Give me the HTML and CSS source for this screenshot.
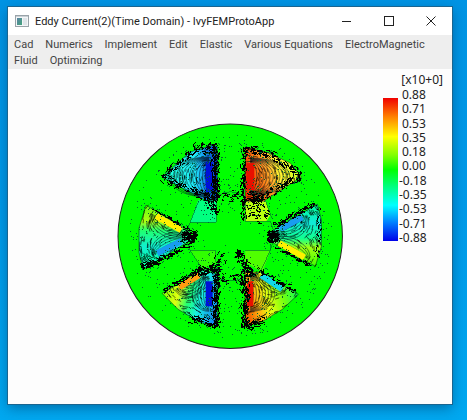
FILE: index.html
```html
<!DOCTYPE html>
<html lang="en">
<head>
  <meta charset="UTF-8" />
  <title>Eddy Current(2)(Time Domain) - IvyFEMProtoApp</title>
  <link rel="stylesheet" href="styles.css">
</head>
<body>

  <div class="window">
    <header class="titlebar">
      <svg class="app-icon" viewBox="0 0 14 12" aria-hidden="true">
        <defs>
          <linearGradient id="iconFill" x1="0" y1="0" x2="1" y2="1">
            <stop offset="0" stop-color="#5b83a3" />
            <stop offset="1" stop-color="#43a47c" />
          </linearGradient>
        </defs>
        <rect x="0.5" y="0.5" width="13" height="11" fill="#f4f6f7" stroke="#9aa3a9" />
        <rect x="1" y="1" width="12" height="1" fill="#c9d0d5" />
        <rect x="2" y="3" width="5" height="7" fill="url(#iconFill)" />
        <rect x="8" y="3" width="4" height="7" fill="#dfe5e9" />
      </svg>
      <h1>Eddy Current(2)(Time Domain) - IvyFEMProtoApp</h1>
      <div class="caption-buttons">
        <button type="button" aria-label="Minimize"><svg viewBox="0 0 10 10"><path d="M0 5.5H9" /></svg></button>
        <button type="button" aria-label="Maximize"><svg viewBox="0 0 10 10"><path d="M.5 .5H9.5V9.5H.5Z" /></svg></button>
        <button type="button" aria-label="Close"><svg viewBox="0 0 10 10"><path class="cross" d="M.5 .5L9.5 9.5M9.5 .5L.5 9.5" /></svg></button>
      </div>
    </header>

    <nav class="menu">
      <button type="button">Cad</button>
      <button type="button">Numerics</button>
      <button type="button">Implement</button>
      <button type="button">Edit</button>
      <button type="button">Elastic</button>
      <button type="button">Various Equations</button>
      <button type="button">ElectroMagnetic</button>
      <button type="button">Fluid</button>
      <button type="button">Optimizing</button>
    </nav>

    <main class="view">
      <svg class="plot" viewBox="117 123 226 226" role="img" aria-label="Field plot">
        <defs>
          <linearGradient id="topLeft"><stop offset="0" stop-color="#00ffa0" /><stop offset=".2" stop-color="#1fffe0" /><stop offset=".6" stop-color="#20e8f8" /><stop offset=".75" stop-color="#169af0" /><stop offset="1" stop-color="#0030d0" /></linearGradient>
          <linearGradient id="topRight" x1="0" y1=".6" x2="1" y2=".3"><stop offset="0" stop-color="#f03000" /><stop offset=".22" stop-color="#f86a10" /><stop offset=".42" stop-color="#ffa828" /><stop offset=".58" stop-color="#fff030" /><stop offset="1" stop-color="#c0ff20" /></linearGradient>
          <linearGradient id="left" x1="0" y1="0" x2="0" y2="1"><stop offset="0" stop-color="#60ff10" /><stop offset=".25" stop-color="#b0ff10" /><stop offset=".4" stop-color="#20ff70" /><stop offset=".65" stop-color="#10f0d0" /><stop offset="1" stop-color="#00ff90" /></linearGradient>
          <linearGradient id="right" x1="0" y1="0" x2="0" y2="1"><stop offset="0" stop-color="#00ff90" /><stop offset=".3" stop-color="#10e8d8" /><stop offset=".55" stop-color="#10ff90" /><stop offset=".7" stop-color="#a0ff10" /><stop offset="1" stop-color="#40ff00" /></linearGradient>
          <linearGradient id="bottomLeft" x1="0" y1=".3" x2="1" y2=".6"><stop offset="0" stop-color="#70ff00" /><stop offset=".3" stop-color="#e0ff10" /><stop offset=".5" stop-color="#20ff70" /><stop offset=".7" stop-color="#18f0e0" /><stop offset="1" stop-color="#1090f0" /></linearGradient>
          <linearGradient id="bottomRight" x1="0" y1=".6" x2="1" y2=".3"><stop offset="0" stop-color="#f06000" /><stop offset=".2" stop-color="#ffb010" /><stop offset=".4" stop-color="#e8ff10" /><stop offset=".7" stop-color="#70ff10" /><stop offset="1" stop-color="#00ff60" /></linearGradient>
        </defs>

        <circle class="stator" cx="230" cy="236" r="112" />

        <g class="shoes">
          <path fill="#00ff80" d="M198 200L217 200L216 222H190Z" />
          <path fill="#b8ff10" d="M245 200L265 200L270 215L266 221H245Z" />
          <path fill="#30ff00" d="M190 250H216V262L203 269Z" />
          <path fill="#50ff00" d="M245 250H270L262 272L245 262Z" />
        </g>

        <g id="coils"></g>

        <path class="outline" d="M190 222H216V197M245 197V221H270M190 250H215V262M245 250H270V245M190 222L185 236L190 250L203 270M270 221L275 236L270 250L260 272M198 202L190 222M265 200L272 219M216 197Q230 186 245 197M216 277Q230 284 245 277" />
        <path id="fine-arrows" class="arrows fine" />
        <g id="bars"></g>
        <path id="arrows" class="arrows" />
        <path id="dots" class="dots" />
      </svg>

      <div class="legend">
        <div class="legend-title">[x10+0]</div>
        <div class="legend-body">
          <div class="legend-bar"></div>
          <ol class="legend-labels">
            <li>0.88</li>
            <li>0.71</li>
            <li>0.53</li>
            <li>0.35</li>
            <li>0.18</li>
            <li>0.00</li>
            <li class="negative">-0.18</li>
            <li class="negative">-0.35</li>
            <li class="negative">-0.53</li>
            <li class="negative">-0.71</li>
            <li class="negative">-0.88</li>
          </ol>
        </div>
      </div>
    </main>
  </div>

  <script src="plot.js"></script>

</body>
</html>
```

FILE: styles.css
```css
* {
  box-sizing: border-box;
}
html {
  height: 100%;
}
body {
  margin: 0;
  height: 100%;
  padding: 7px 15px 16px 8px;
  background: linear-gradient(#0094e4, #009ae8 50%, #00a8f0);
  font-family: "Noto Sans", "Open Sans", sans-serif;
  color: #222;
}
button {
  border: 0;
  padding: 0;
  background: none;
  font: inherit;
  color: inherit;
}
.window {
  display: flex;
  flex-direction: column;
  min-height: 100%;
  background: #fdfdfd;
  outline: 1px solid #1a6590;
  box-shadow: 0 4px 12px rgba(0, 40, 80, 0.45);
}

/* title bar */
.titlebar {
  display: flex;
  align-items: center;
  height: 28px;
  padding-left: 7px;
  background: #fff;
}
.app-icon {
  width: 14px;
  height: 12px;
}
.titlebar h1 {
  flex: 1;
  margin: 0 0 0 6px;
  font-family: Roboto, sans-serif;
  font-size: 11px;
  font-weight: normal;
  white-space: nowrap;
}
.caption-buttons {
  display: flex;
}
.caption-buttons button {
  display: flex;
  align-items: center;
  justify-content: center;
  width: 42px;
  height: 28px;
}
.caption-buttons svg {
  width: 10px;
  height: 10px;
  fill: none;
  stroke: #222;
  shape-rendering: crispEdges;
}
.caption-buttons .cross {
  shape-rendering: auto;
}

/* menu */
.menu {
  display: flex;
  flex-wrap: wrap;
  column-gap: 12px;
  padding: 2px 6px 0;
  background: #eee;
  font-family: Roboto, sans-serif;
  font-size: 11px;
  line-height: 16px;
  color: #444;
}

/* result view */
.view {
  position: relative;
  flex: 1;
  display: flex;
  align-items: center;
  justify-content: center;
}
.plot {
  width: 51%;
}
.stator {
  fill: #0f0;
  stroke: #222;
  stroke-width: 1;
}
.outline,
.arrows,
.contour {
  fill: none;
  stroke: #000;
  shape-rendering: crispEdges;
}
.outline {
  stroke: #063;
  stroke-width: 0.6;
}
.arrows {
  stroke-width: 1;
}
.fine {
  stroke-width: 0.6;
  shape-rendering: auto;
}
.contour {
  stroke: #012;
  stroke-width: 0.5;
  shape-rendering: auto;
}
.dots {
  fill: #063;
  shape-rendering: crispEdges;
}

/* colour legend */
.legend {
  position: absolute;
  top: 3px;
  right: 9px;
  width: 60px;
  font-size: 12px;
  line-height: 16px;
}
.legend-title {
  text-align: right;
}
.legend-body {
  display: flex;
  gap: 1px;
}
.legend-bar {
  width: 15px;
  height: 143px;
  margin-top: 10px;
  background: linear-gradient(#f00000, #ff8000 13%, #ffff00 27%, #80ff00 40%, #00ff00 50%, #00ff80 62%, #00ffff 75%, #0080ff 87%, #0000e8);
}
.legend-labels {
  display: flex;
  flex-direction: column;
  justify-content: space-between;
  height: 157px;
  margin: 0;
  padding: 0;
  list-style: none;
  line-height: 14px;
}
.legend-labels li {
  padding-left: 3px;
}
.legend-labels .negative {
  padding-left: 0;
}
```

FILE: plot.js
```js
const svgNS = 'http://www.w3.org/2000/svg';

// slot outline, fill gradient and conductor bars (x1, y1, x2, y2)
const coils = [
  {
    fill: 'topLeft', shape: [[162, 177], [190, 152], [213, 145], [217, 147], [217, 199], [207, 201]],
    bars: [{ line: [209, 162, 209, 192], width: 7, color: '#0010d8', bend: -42 }]
  },
  {
    fill: 'topRight', shape: [[245, 147], [268, 153], [290, 163], [301, 177], [263, 201], [245, 201]],
    bars: [{ line: [250, 163, 250, 190], width: 8, color: '#e81000', bend: 42 }]
  },
  {
    fill: 'left', shape: [[146, 205], [190, 232], [192, 239], [143, 269], [139, 252], [139, 228]],
    bars: [
      { line: [156, 216, 181, 230], width: 6, color: '#fff000', bend: -14 },
      { line: [157, 253, 181, 241], width: 6, color: '#189cf0', bend: 14 }
    ]
  },
  {
    fill: 'right', shape: [[317, 204], [321, 220], [321, 246], [315, 266], [270, 241], [270, 232]],
    bars: [
      { line: [280, 229, 302, 217], width: 6, color: '#189cf0', bend: -16 },
      { line: [279, 243, 304, 257], width: 6, color: '#fff000', bend: 12 }
    ]
  },
  {
    fill: 'bottomLeft', shape: [[162, 293], [203, 270], [217, 274], [217, 325], [200, 322], [178, 309]],
    bars: [
      { line: [179, 287, 199, 275], width: 6, color: '#ff9c10', bend: -16 },
      { line: [209, 281, 209, 306], width: 7, color: '#0010d8', bend: -18 }
    ]
  },
  {
    fill: 'bottomRight', shape: [[245, 272], [260, 272], [298, 294], [282, 309], [262, 321], [245, 326]],
    bars: [
      { line: [250, 281, 250, 306], width: 6, color: '#e81000', bend: 26 },
      { line: [261, 275, 282, 289], width: 6, color: '#10d8e8', bend: -8 }
    ]
  }
];

// bands where the arrows pile up: x1, y1, x2, y2, spread, count
const bands = [
  [215, 147, 216, 200, 3, 150],
  [194, 149, 218, 148, 4, 60],
  [163, 177, 192, 151, 3, 45],
  [163, 178, 215, 200, 3, 80],
  [209, 198, 217, 216, 4, 32],
  [244, 148, 243, 219, 2, 100],
  [244, 150, 270, 153, 3, 50],
  [270, 154, 300, 176, 3, 60],
  [300, 176, 256, 201, 3, 70],
  [248, 196, 262, 201, 4, 50],
  [246, 204, 266, 217, 6, 35],
  [153, 209, 190, 230, 1, 45],
  [183, 235, 196, 237, 4, 100],
  [143, 268, 190, 244, 2, 80],
  [141, 266, 153, 262, 3, 35],
  [274, 226, 315, 203, 2, 80],
  [268, 237, 278, 236, 4, 100],
  [276, 247, 309, 265, 1, 50],
  [319, 208, 317, 258, 2, 25],
  [163, 291, 200, 269, 2, 70],
  [198, 272, 220, 269, 4, 75],
  [216, 269, 216, 326, 3, 140],
  [191, 318, 217, 325, 3, 45],
  [237, 251, 252, 276, 3, 100],
  [245, 270, 245, 328, 3, 150],
  [245, 326, 264, 321, 3, 40],
  [257, 269, 296, 292, 2, 45],
  [205, 270, 225, 258, 5, 24],
  [218, 196, 244, 194, 4, 24],
  [218, 277, 244, 279, 4, 28]
];

let seed = 7;
function random() {
  seed = (seed * 16807) % 2147483647;
  return seed / 2147483647;
}

function addPath(parent, attrs) {
  const path = document.createElementNS(svgNS, 'path');
  for (const name in attrs) path.setAttribute(name, attrs[name]);
  parent.appendChild(path);
}

function stroke(x, y, angle, length) {
  const dx = Math.cos(angle) * length / 2;
  const dy = Math.sin(angle) * length / 2;
  return `M${(x - dx).toFixed(1)} ${(y - dy).toFixed(1)}L${(x + dx).toFixed(1)} ${(y + dy).toFixed(1)}`;
}

function drawCoils() {
  const group = document.getElementById('coils');
  const bars = document.getElementById('bars');
  coils.forEach(coil => {
    const outline = 'M' + coil.shape.map(p => p.join(' ')).join('L') + 'Z';
    addPath(group, { d: outline, fill: `url(#${coil.fill})` });
    addPath(group, { d: outline, class: 'contour' });
    coil.bars.forEach(bar => {
      const [x1, y1, x2, y2] = bar.line;
      const length = Math.hypot(x2 - x1, y2 - y1);
      const ux = (x2 - x1) / length;
      const uy = (y2 - y1) / length;
      addPath(bars, { d: `M${x1} ${y1}L${x2} ${y2}`, stroke: bar.color, 'stroke-width': bar.width });
      // field lines bulge away from the conductor
      const lines = Math.round(Math.abs(bar.bend) / 4) + 1;
      for (let i = 1; i <= lines; i++) {
        const b = bar.bend * i / lines * 1.25;
        const grow = i / lines * 5;
        const ax = x1 - ux * grow;
        const ay = y1 - uy * grow;
        const bx = x2 + ux * grow;
        const by = y2 + uy * grow;
        addPath(group, {
          d: `M${ax} ${ay}C${ax + uy * b} ${ay - ux * b} ${bx + uy * b} ${by - ux * b} ${bx} ${by}`,
          class: 'contour'
        });
      }
    });
  });
}

function inside(shape, x, y) {
  let hit = false;
  for (let i = 0, j = shape.length - 1; i < shape.length; j = i++) {
    const [xi, yi] = shape[i];
    const [xj, yj] = shape[j];
    if ((yi > y) !== (yj > y) && x < (xj - xi) * (y - yi) / (yj - yi) + xi) hit = !hit;
  }
  return hit;
}

function drawArrows() {
  let d = '';
  bands.forEach(([x1, y1, x2, y2, spread, count]) => {
    const angle = Math.atan2(y2 - y1, x2 - x1);
    for (let i = 0; i < count; i++) {
      const t = random();
      const off = (random() + random() - 1) * spread * 1.7;
      const x = x1 + (x2 - x1) * t - Math.sin(angle) * off;
      const y = y1 + (y2 - y1) * t + Math.cos(angle) * off;
      d += stroke(x, y, angle + (random() - 0.5) * 1.6, 1 + random() * 4);
    }
  });
  document.getElementById('arrows').setAttribute('d', d);

  // arrows over the slots, turning around the nearest conductor
  d = '';
  coils.forEach(coil => {
    for (let i = 0; i < 1000; i++) {
      const x = coil.shape[0][0] + (random() - 0.5) * 140;
      const y = coil.shape[0][1] + (random() - 0.5) * 140;
      if (!inside(coil.shape, x, y)) continue;
      let best = null;
      coil.bars.forEach(bar => {
        const cx = (bar.line[0] + bar.line[2]) / 2;
        const cy = (bar.line[1] + bar.line[3]) / 2;
        const dist = Math.hypot(x - cx, y - cy);
        if (!best || dist < best.dist) best = { dist, cx, cy };
      });
      d += stroke(x, y, Math.atan2(y - best.cy, x - best.cx) + Math.PI / 2, 2 + random() * 4);
    }
  });
  document.getElementById('fine-arrows').setAttribute('d', d);
}

function drawDots() {
  let d = '';
  for (let i = 0; i < 620; i++) {
    const angle = random() * Math.PI * 2;
    const r = 22 + Math.sqrt(random()) * 80;
    const x = Math.round(230 + Math.cos(angle) * r);
    const y = Math.round(236 + Math.sin(angle) * r);
    d += `M${x} ${y}h1v1h-1z`;
  }
  // denser speckle just outside each band
  bands.forEach(([x1, y1, x2, y2, spread]) => {
    for (let i = 0; i < 20; i++) {
      const t = random();
      const x = Math.round(x1 + (x2 - x1) * t + (random() - 0.5) * spread * 6);
      const y = Math.round(y1 + (y2 - y1) * t + (random() - 0.5) * spread * 6);
      d += `M${x} ${y}h1v1h-1z`;
    }
  });
  document.getElementById('dots').setAttribute('d', d);
}

drawCoils();
drawArrows();
drawDots();
```
